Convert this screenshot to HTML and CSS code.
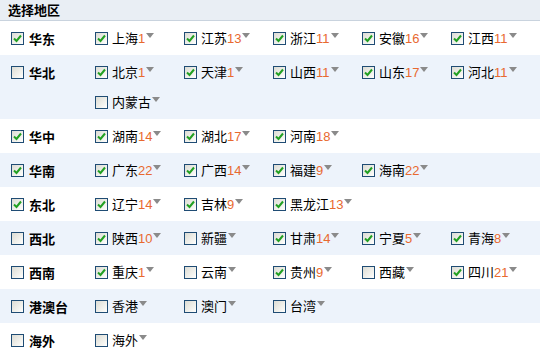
FILE: index.html
```html
<!DOCTYPE html>
<html lang="zh-CN">
<head>
    <meta charset="UTF-8">
    <title>选择地区</title>
    <link rel="stylesheet" href="styles.css">
</head>
<body>
    <div class="picker">
        <div class="picker-head">选择地区</div>

        <!-- 华东 -->
        <div class="area">
            <label class="area-name"><span class="cb on"><svg viewBox="0 0 11 11"><path d="M2 5.5 L4.5 8 L9 2.5"/></svg></span>华东</label>
            <div class="cities">
                <span class="city"><span class="cb on"><svg viewBox="0 0 11 11"><path d="M2 5.5 L4.5 8 L9 2.5"/></svg></span><span class="name">上海<em>1</em><i class="arrow"></i></span></span>
                <span class="city"><span class="cb on"><svg viewBox="0 0 11 11"><path d="M2 5.5 L4.5 8 L9 2.5"/></svg></span><span class="name">江苏<em>13</em><i class="arrow"></i></span></span>
                <span class="city"><span class="cb on"><svg viewBox="0 0 11 11"><path d="M2 5.5 L4.5 8 L9 2.5"/></svg></span><span class="name">浙江<em>11</em><i class="arrow"></i></span></span>
                <span class="city"><span class="cb on"><svg viewBox="0 0 11 11"><path d="M2 5.5 L4.5 8 L9 2.5"/></svg></span><span class="name">安徽<em>16</em><i class="arrow"></i></span></span>
                <span class="city"><span class="cb on"><svg viewBox="0 0 11 11"><path d="M2 5.5 L4.5 8 L9 2.5"/></svg></span><span class="name">江西<em>11</em><i class="arrow"></i></span></span>
            </div>
        </div>

        <!-- 华北 -->
        <div class="area alt">
            <label class="area-name"><span class="cb"></span>华北</label>
            <div class="cities">
                <span class="city"><span class="cb on"><svg viewBox="0 0 11 11"><path d="M2 5.5 L4.5 8 L9 2.5"/></svg></span><span class="name">北京<em>1</em><i class="arrow"></i></span></span>
                <span class="city"><span class="cb on"><svg viewBox="0 0 11 11"><path d="M2 5.5 L4.5 8 L9 2.5"/></svg></span><span class="name">天津<em>1</em><i class="arrow"></i></span></span>
                <span class="city"><span class="cb on"><svg viewBox="0 0 11 11"><path d="M2 5.5 L4.5 8 L9 2.5"/></svg></span><span class="name">山西<em>11</em><i class="arrow"></i></span></span>
                <span class="city"><span class="cb on"><svg viewBox="0 0 11 11"><path d="M2 5.5 L4.5 8 L9 2.5"/></svg></span><span class="name">山东<em>17</em><i class="arrow"></i></span></span>
                <span class="city"><span class="cb on"><svg viewBox="0 0 11 11"><path d="M2 5.5 L4.5 8 L9 2.5"/></svg></span><span class="name">河北<em>11</em><i class="arrow"></i></span></span>
                <span class="city"><span class="cb"></span><span class="name">内蒙古<i class="arrow"></i></span></span>
            </div>
        </div>

        <!-- 华中 -->
        <div class="area">
            <label class="area-name"><span class="cb on"><svg viewBox="0 0 11 11"><path d="M2 5.5 L4.5 8 L9 2.5"/></svg></span>华中</label>
            <div class="cities">
                <span class="city"><span class="cb on"><svg viewBox="0 0 11 11"><path d="M2 5.5 L4.5 8 L9 2.5"/></svg></span><span class="name">湖南<em>14</em><i class="arrow"></i></span></span>
                <span class="city"><span class="cb on"><svg viewBox="0 0 11 11"><path d="M2 5.5 L4.5 8 L9 2.5"/></svg></span><span class="name">湖北<em>17</em><i class="arrow"></i></span></span>
                <span class="city"><span class="cb on"><svg viewBox="0 0 11 11"><path d="M2 5.5 L4.5 8 L9 2.5"/></svg></span><span class="name">河南<em>18</em><i class="arrow"></i></span></span>
            </div>
        </div>

        <!-- 华南 -->
        <div class="area alt">
            <label class="area-name"><span class="cb on"><svg viewBox="0 0 11 11"><path d="M2 5.5 L4.5 8 L9 2.5"/></svg></span>华南</label>
            <div class="cities">
                <span class="city"><span class="cb on"><svg viewBox="0 0 11 11"><path d="M2 5.5 L4.5 8 L9 2.5"/></svg></span><span class="name">广东<em>22</em><i class="arrow"></i></span></span>
                <span class="city"><span class="cb on"><svg viewBox="0 0 11 11"><path d="M2 5.5 L4.5 8 L9 2.5"/></svg></span><span class="name">广西<em>14</em><i class="arrow"></i></span></span>
                <span class="city"><span class="cb on"><svg viewBox="0 0 11 11"><path d="M2 5.5 L4.5 8 L9 2.5"/></svg></span><span class="name">福建<em>9</em><i class="arrow"></i></span></span>
                <span class="city"><span class="cb on"><svg viewBox="0 0 11 11"><path d="M2 5.5 L4.5 8 L9 2.5"/></svg></span><span class="name">海南<em>22</em><i class="arrow"></i></span></span>
            </div>
        </div>

        <!-- 东北 -->
        <div class="area">
            <label class="area-name"><span class="cb on"><svg viewBox="0 0 11 11"><path d="M2 5.5 L4.5 8 L9 2.5"/></svg></span>东北</label>
            <div class="cities">
                <span class="city"><span class="cb on"><svg viewBox="0 0 11 11"><path d="M2 5.5 L4.5 8 L9 2.5"/></svg></span><span class="name">辽宁<em>14</em><i class="arrow"></i></span></span>
                <span class="city"><span class="cb on"><svg viewBox="0 0 11 11"><path d="M2 5.5 L4.5 8 L9 2.5"/></svg></span><span class="name">吉林<em>9</em><i class="arrow"></i></span></span>
                <span class="city"><span class="cb on"><svg viewBox="0 0 11 11"><path d="M2 5.5 L4.5 8 L9 2.5"/></svg></span><span class="name">黑龙江<em>13</em><i class="arrow"></i></span></span>
            </div>
        </div>

        <!-- 西北 -->
        <div class="area alt">
            <label class="area-name"><span class="cb"></span>西北</label>
            <div class="cities">
                <span class="city"><span class="cb on"><svg viewBox="0 0 11 11"><path d="M2 5.5 L4.5 8 L9 2.5"/></svg></span><span class="name">陕西<em>10</em><i class="arrow"></i></span></span>
                <span class="city"><span class="cb"></span><span class="name">新疆<i class="arrow"></i></span></span>
                <span class="city"><span class="cb on"><svg viewBox="0 0 11 11"><path d="M2 5.5 L4.5 8 L9 2.5"/></svg></span><span class="name">甘肃<em>14</em><i class="arrow"></i></span></span>
                <span class="city"><span class="cb on"><svg viewBox="0 0 11 11"><path d="M2 5.5 L4.5 8 L9 2.5"/></svg></span><span class="name">宁夏<em>5</em><i class="arrow"></i></span></span>
                <span class="city"><span class="cb on"><svg viewBox="0 0 11 11"><path d="M2 5.5 L4.5 8 L9 2.5"/></svg></span><span class="name">青海<em>8</em><i class="arrow"></i></span></span>
            </div>
        </div>

        <!-- 西南 -->
        <div class="area">
            <label class="area-name"><span class="cb"></span>西南</label>
            <div class="cities">
                <span class="city"><span class="cb on"><svg viewBox="0 0 11 11"><path d="M2 5.5 L4.5 8 L9 2.5"/></svg></span><span class="name">重庆<em>1</em><i class="arrow"></i></span></span>
                <span class="city"><span class="cb"></span><span class="name">云南<i class="arrow"></i></span></span>
                <span class="city"><span class="cb on"><svg viewBox="0 0 11 11"><path d="M2 5.5 L4.5 8 L9 2.5"/></svg></span><span class="name">贵州<em>9</em><i class="arrow"></i></span></span>
                <span class="city"><span class="cb"></span><span class="name">西藏<i class="arrow"></i></span></span>
                <span class="city"><span class="cb on"><svg viewBox="0 0 11 11"><path d="M2 5.5 L4.5 8 L9 2.5"/></svg></span><span class="name">四川<em>21</em><i class="arrow"></i></span></span>
            </div>
        </div>

        <!-- 港澳台 -->
        <div class="area alt">
            <label class="area-name"><span class="cb"></span>港澳台</label>
            <div class="cities">
                <span class="city"><span class="cb"></span><span class="name">香港<i class="arrow"></i></span></span>
                <span class="city"><span class="cb"></span><span class="name">澳门<i class="arrow"></i></span></span>
                <span class="city"><span class="cb"></span><span class="name">台湾<i class="arrow"></i></span></span>
            </div>
        </div>

        <!-- 海外 -->
        <div class="area">
            <label class="area-name"><span class="cb"></span>海外</label>
            <div class="cities">
                <span class="city"><span class="cb"></span><span class="name">海外<i class="arrow"></i></span></span>
            </div>
        </div>
    </div>
</body>
</html>
```

FILE: styles.css
```css
body {
    margin: 0;
    background-color: #fff;
    font-family: "Noto Sans CJK SC", "Noto Sans", sans-serif;
    font-size: 13px;
    color: #000;
}

.picker {
    width: 540px;
}

.picker-head {
    height: 20px;
    line-height: 20px;
    padding-left: 8px;
    font-weight: bold;
    background-color: #e9eef4;
    border-bottom: 1px solid #c9d3de;
}

.area {
    display: flex;
    padding: 2px 0;
}

.area.alt {
    background-color: #edf3fb;
}

.area-name {
    width: 84px;
    padding-left: 11px;
    height: 30px;
    display: flex;
    align-items: center;
    gap: 5px;
    font-weight: bold;
}

.cities {
    flex: 1;
    display: flex;
    flex-wrap: wrap;
}

.city {
    width: 89px;
    height: 30px;
    display: flex;
    align-items: center;
    gap: 4px;
}

.cb {
    width: 11px;
    height: 11px;
    border: 1px solid #1f4c74;
    background: linear-gradient(135deg, #dcdcd4 0%, #f4f4f0 70%, #fff 100%);
    flex: none;
    display: flex;
}

.cb svg {
    width: 11px;
    height: 11px;
}

.cb svg path {
    fill: none;
    stroke: #22a022;
    stroke-width: 2;
}

.name {
    white-space: nowrap;
    line-height: 18px;
}

.name em {
    font-style: normal;
    font-family: "Liberation Sans", Arial, sans-serif;
    font-size: 13px;
    color: #e8692f;
}

.arrow {
    display: inline-block;
    width: 0;
    height: 0;
    border-left: 4px solid transparent;
    border-right: 4px solid transparent;
    border-top: 5px solid #8a8a8a;
    margin-left: 1px;
    vertical-align: 5px;
}
```
